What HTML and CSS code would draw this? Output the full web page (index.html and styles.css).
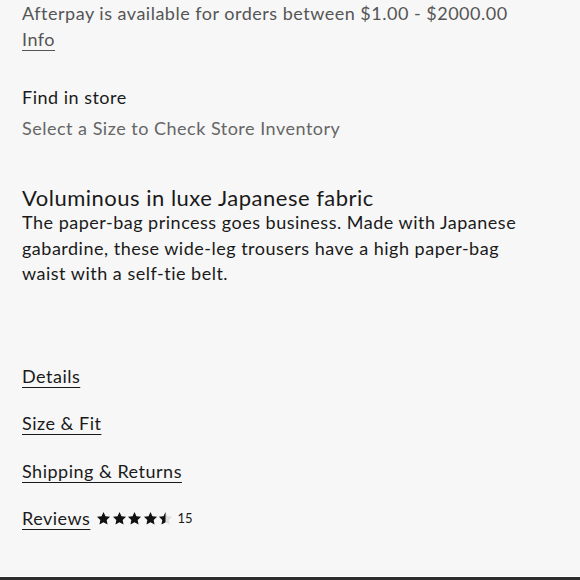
FILE: index.html
```html
<!DOCTYPE html>
<html lang="en">
<head>
  <meta charset="UTF-8">
  <title>Product details</title>
  <link rel="stylesheet" href="styles.css">
</head>
<body>
  <div class="page">
    <!-- AFTERPAY -->
    <div class="afterpay">
      Afterpay is available for orders between $1.00 - $2000.00<br>
      <a href="#" class="link">Info</a>
    </div>

    <!-- FIND IN STORE -->
    <div class="store">
      <div class="store-title">Find in store</div>
      <div class="store-note">Select a Size to Check Store Inventory</div>
    </div>

    <!-- DESCRIPTION -->
    <div class="description">
      <h2 class="desc-title">Voluminous in luxe Japanese fabric</h2>
      <p class="desc-text">The paper-bag princess goes business. Made with Japanese gabardine, these wide-leg trousers have a high paper-bag waist with a self-tie belt.</p>
    </div>

    <!-- ACCORDION LINKS -->
    <ul class="sections">
      <li><a href="#" class="link">Details</a></li>
      <li><a href="#" class="link">Size &amp; Fit</a></li>
      <li><a href="#" class="link">Shipping &amp; Returns</a></li>
      <li class="reviews">
        <a href="#" class="link">Reviews</a>
        <span class="stars">
          <svg viewBox="0 0 16 16" class="star"><path d="M8 1l2.1 4.5 4.9.6-3.6 3.4.9 4.9L8 12l-4.3 2.4.9-4.9L1 6.1l4.9-.6z"/></svg>
          <svg viewBox="0 0 16 16" class="star"><path d="M8 1l2.1 4.5 4.9.6-3.6 3.4.9 4.9L8 12l-4.3 2.4.9-4.9L1 6.1l4.9-.6z"/></svg>
          <svg viewBox="0 0 16 16" class="star"><path d="M8 1l2.1 4.5 4.9.6-3.6 3.4.9 4.9L8 12l-4.3 2.4.9-4.9L1 6.1l4.9-.6z"/></svg>
          <svg viewBox="0 0 16 16" class="star"><path d="M8 1l2.1 4.5 4.9.6-3.6 3.4.9 4.9L8 12l-4.3 2.4.9-4.9L1 6.1l4.9-.6z"/></svg>
          <svg viewBox="0 0 16 16" class="star"><path class="star-off" d="M8 1l2.1 4.5 4.9.6-3.6 3.4.9 4.9L8 12l-4.3 2.4.9-4.9L1 6.1l4.9-.6z"/><path d="M8 1v11l-4.3 2.4.9-4.9L1 6.1l4.9-.6z"/></svg>
        </span>
        <span class="count">15</span>
      </li>
    </ul>
  </div>
  <div class="bottom-bar"></div>
</body>
</html>
```

FILE: styles.css
```css
html, body {
  margin: 0;
  padding: 0;
  background: #f7f7f7;
}

body {
  font-family: Lato, "Noto Sans", sans-serif;
  font-size: 18px;
  letter-spacing: 0.5px;
  color: #1a1a1a;
  height: 580px;
  display: flex;
  flex-direction: column;
}

.page {
  flex: 1;
  padding: 0 22px;
}

.link {
  color: #1a1a1a;
  text-decoration: underline;
  text-underline-offset: 4px;
  text-decoration-thickness: 1px;
}

/* AFTERPAY */
.afterpay {
  color: #555;
  line-height: 26px;
}

.afterpay .link {
  color: #555;
}

/* FIND IN STORE */
.store {
  margin-top: 30px;
  line-height: 31px;
}

.store-note {
  color: #666;
}

/* DESCRIPTION */
.description {
  margin-top: 41px;
}

.desc-title {
  font-size: 22px;
  font-weight: normal;
  line-height: 25px;
  margin: 0;
}

.desc-text {
  margin: 0;
  max-width: 520px;
  line-height: 25.5px;
}

/* SECTIONS */
.sections {
  list-style: none;
  margin: 76px 0 0 0;
  padding: 0;
}

.sections li {
  line-height: 26px;
  margin-bottom: 21.5px;
}

.reviews {
  display: flex;
  align-items: center;
}

.stars {
  display: flex;
  gap: 0.5px;
  margin-left: 6px;
}

.star {
  width: 15px;
  height: 15px;
  fill: #111;
}

.star-off {
  fill: #ddd;
}

.count {
  font-size: 13px;
  letter-spacing: 0;
  margin-left: 4px;
}

.bottom-bar {
  height: 3px;
  background: #2e2e2e;
  border-top: 1px solid #fff;
}
```
